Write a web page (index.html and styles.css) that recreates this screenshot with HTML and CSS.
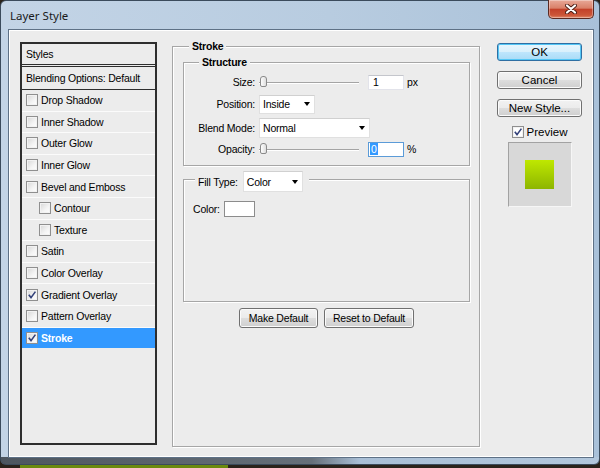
FILE: index.html
```html
<!DOCTYPE html>
<html>
<head>
    <title>Layer Style</title>
    <link rel="stylesheet" href="styles.css">
</head>
<body>
    <div class="window">
        <div class="titlebar">
            <span class="title">Layer Style</span>
            <div class="close-btn">
                <svg width="12" height="10" viewBox="0 0 12 10">
                    <path d="M2 1.5 L10 8.5 M10 1.5 L2 8.5" stroke="#4a1c14" stroke-width="4" stroke-linecap="round"/>
                    <path d="M2 1.5 L10 8.5 M10 1.5 L2 8.5" stroke="#fff" stroke-width="2.2" stroke-linecap="round"/>
                </svg>
            </div>
        </div>

        <div class="client">
            <!-- left: list of layer styles -->
            <div class="style-list">
                <div class="list-head">Styles</div>
                <div class="list-head blend">Blending Options: Default</div>
                <div class="list-item first"><span class="check"></span>Drop Shadow</div>
                <div class="list-item"><span class="check"></span>Inner Shadow</div>
                <div class="list-item"><span class="check"></span>Outer Glow</div>
                <div class="list-item"><span class="check"></span>Inner Glow</div>
                <div class="list-item"><span class="check"></span>Bevel and Emboss</div>
                <div class="list-item sub"><span class="check"></span>Contour</div>
                <div class="list-item sub"><span class="check"></span>Texture</div>
                <div class="list-item"><span class="check"></span>Satin</div>
                <div class="list-item"><span class="check"></span>Color Overlay</div>
                <div class="list-item"><span class="check on"><svg width="10" height="10" viewBox="0 0 10 10"><path d="M1.8 4.8 L4 7.6 L8.4 1.6" fill="none" stroke="#34427a" stroke-width="1.6"/></svg></span>Gradient Overlay</div>
                <div class="list-item"><span class="check"></span>Pattern Overlay</div>
                <div class="list-item selected"><span class="check on"><svg width="10" height="10" viewBox="0 0 10 10"><path d="M1.8 4.8 L4 7.6 L8.4 1.6" fill="none" stroke="#34427a" stroke-width="1.6"/></svg></span>Stroke</div>
            </div>

            <!-- middle: stroke settings -->
            <div class="group stroke-group">
                <div class="group-title stroke-title">Stroke</div>

                <div class="group structure">
                    <div class="group-title structure-title">Structure</div>
                    <div class="row short first-row">
                        <label>Size:</label>
                        <div class="slider"><span class="thumb"></span></div>
                        <div class="field">1</div>
                        <span class="unit">px</span>
                    </div>
                    <div class="row">
                        <label>Position:</label>
                        <div class="select pos-select">Inside<i></i></div>
                    </div>
                    <div class="row">
                        <label>Blend Mode:</label>
                        <div class="select blend-select">Normal<i></i></div>
                    </div>
                    <div class="row short last-row">
                        <label>Opacity:</label>
                        <div class="slider"><span class="thumb"></span></div>
                        <div class="field focused"><span class="sel-text">0</span></div>
                        <span class="unit">%</span>
                    </div>
                </div>

                <div class="group fill">
                    <div class="group-title fill-title">
                        <span>Fill Type:</span>
                        <div class="select fill-select">Color<i></i></div>
                    </div>
                    <div class="color-row">
                        <span>Color:</span>
                        <div class="swatch"></div>
                    </div>
                </div>

                <div class="btn-row">
                    <button class="btn make-default">Make Default</button>
                    <button class="btn reset-default">Reset to Default</button>
                </div>
            </div>

            <!-- right: dialog actions -->
            <div class="actions">
                <button class="btn big default">OK</button>
                <button class="btn big">Cancel</button>
                <button class="btn big">New Style...</button>
                <div class="preview-row">
                    <span class="check on"><svg width="10" height="10" viewBox="0 0 10 10"><path d="M1.8 4.8 L4 7.6 L8.4 1.6" fill="none" stroke="#34427a" stroke-width="1.6"/></svg></span>
                    <span>Preview</span>
                </div>
                <div class="preview-box">
                    <div class="preview-swatch"></div>
                </div>
            </div>
        </div>
    </div>
    <div class="desk-strip"></div>
</body>
</html>
```

FILE: styles.css
```css
body {
    margin: 0;
    width: 600px;
    height: 468px;
    overflow: hidden;
    background-color: #2a231b;
    font-family: "Liberation Sans", Arial, sans-serif;
    font-size: 10.5px;
    letter-spacing: -0.2px;
    color: #000;
}

.window {
    width: 600px;
    height: 465px;
    box-sizing: border-box;
    border: 1px solid #3b4b5c;
    border-radius: 6px;
    display: flex;
    flex-direction: column;
    background:
        linear-gradient(to right, #4d565f, #66707a 52%, #a9bfd6 60%, #b2c7dc) left bottom / 100% 7px no-repeat,
        linear-gradient(to right, #c3d4e6, #b8cce0 55%, #a9c1d9);
}

.titlebar {
    height: 28px;
    display: flex;
    align-items: center;
    padding: 0 5px 0 9px;
}

.title {
    font-family: "Noto Sans", "Liberation Sans", sans-serif;
    font-size: 11.5px;
    letter-spacing: 0;
    color: #1a1a1a;
}

.close-btn {
    width: 46px;
    height: 19px;
    box-sizing: border-box;
    margin-left: auto;
    align-self: flex-start;
    margin-top: -1px;
    border: 1px solid #5a2a22;
    border-top: none;
    border-radius: 0 0 5px 5px;
    background: linear-gradient(#e8a898 0%, #d98069 45%, #c3412a 52%, #cc5638 85%, #e08a6c 100%);
    box-shadow: inset 0 0 0 1px rgba(255, 255, 255, 0.35);
    display: flex;
    align-items: center;
    justify-content: center;
}

.client {
    margin: 0 5px 0 7px;
    height: 429px;
    box-sizing: border-box;
    border: 1px solid #5e7186;
    box-shadow: inset 1px 1px 0 #fff, inset -1px -1px 0 #fff;
    background-color: #ececec;
    display: flex;
    align-items: flex-start;
    padding: 12px 0 0 11px;
}

/* style list */
.style-list {
    width: 137px;
    height: 403px;
    box-sizing: border-box;
    border: 2px solid #2e2e2e;
    flex-shrink: 0;
}

.list-head {
    height: 20px;
    line-height: 20px;
    padding-left: 4px;
    border-bottom: 1px solid #2e2e2e;
}

.list-head.blend {
    height: 23px;
    line-height: 22px;
    box-sizing: border-box;
    margin-top: 1px;
    border-top: 1px solid #2e2e2e;
    border-bottom: none;
}

.list-item {
    height: 21.6px;
    box-sizing: border-box;
    border-top: 1px solid #fbfbfb;
    display: flex;
    align-items: center;
    padding-left: 4px;
}

.list-item.first {
    border-top-color: #2e2e2e;
}

.list-item.sub {
    padding-left: 17px;
}

.list-item.selected {
    background-color: #3399ff;
    color: #fff;
    font-weight: bold;
}

.check {
    width: 12px;
    height: 12px;
    box-sizing: border-box;
    border: 1px solid #8f8f8f;
    background: linear-gradient(135deg, #d6d6d6, #f4f4f4 60%, #fff);
    box-shadow: inset 0 0 0 1px #f2f2f2;
    margin-right: 3px;
    display: flex;
    align-items: center;
    justify-content: center;
    flex-shrink: 0;
}

.check svg {
    display: block;
}

/* group boxes */
.group {
    border: 1px solid #a6a6a6;
    box-shadow: inset 1px 1px 0 #fff, 1px 1px 0 #fff;
}

.group-title {
    width: fit-content;
    background-color: #ececec;
    padding: 0 3px;
    height: 12px;
    line-height: 12px;
    margin-top: -7px;
    font-weight: bold;
}

.stroke-group {
    width: 308px;
    height: 401px;
    box-sizing: border-box;
    margin: 4px 0 0 15px;
    padding: 0 9px 0 10px;
    flex-shrink: 0;
}

.stroke-title {
    margin-left: 6px;
}

.structure {
    margin-top: 10px;
    padding-bottom: 8px;
}

.structure-title {
    margin-left: 15px;
}

.row {
    display: flex;
    align-items: center;
    height: 20px;
    margin-top: 4px;
}

.row.short {
    height: 16px;
}

.row.first-row {
    margin-top: 6px;
}

.row.last-row {
    margin-top: 3px;
}

.row label {
    width: 71px;
    text-align: right;
    margin-right: 4px;
    flex-shrink: 0;
}

.slider {
    width: 100px;
    height: 12px;
    margin-right: 9px;
    background:
        linear-gradient(#a4a4a4, #a4a4a4) left 6px / 100% 1px no-repeat,
        linear-gradient(#fff, #fff) left 7px / 100% 1px no-repeat;
    display: flex;
}

.thumb {
    width: 7px;
    height: 11px;
    box-sizing: border-box;
    margin-left: 1px;
    border: 1px solid #8a8a8a;
    border-radius: 3px 3px 2px 2px;
    background: linear-gradient(to right, #fdfdfd, #dedede);
}

.field {
    width: 36px;
    height: 15px;
    line-height: 13px;
    box-sizing: border-box;
    padding-left: 4px;
    background-color: #fff;
    border: 1px solid #e2e3ea;
    border-top-color: #c4c6cc;
}

.field.focused {
    border-color: #5b9bd8;
    padding-left: 1px;
}

.sel-text {
    display: inline-block;
    background-color: #3399ff;
    color: #fff;
    padding: 0 1px;
    line-height: 12px;
}

.unit {
    margin-left: 3px;
}

.select {
    height: 20px;
    box-sizing: border-box;
    display: flex;
    align-items: center;
    justify-content: space-between;
    padding: 0 4px 0 3px;
    background-color: #fff;
    border: 1px solid #e0e0e0;
    border-top-color: #d0d0d0;
}

.select i {
    width: 0;
    height: 0;
    border-left: 3.5px solid transparent;
    border-right: 3.5px solid transparent;
    border-top: 4px solid #000;
}

.pos-select {
    width: 56px;
    height: 19px;
}

.blend-select {
    width: 111px;
}

.fill {
    margin-top: 13px;
    height: 123px;
    box-sizing: border-box;
}

.fill-title {
    display: flex;
    align-items: center;
    height: 21px;
    margin: -9px 0 0 11px;
    padding: 0 6px 0 3px;
    font-weight: normal;
}

.fill-select {
    width: 60px;
    height: 21px;
    margin-left: 5px;
}

.color-row {
    display: flex;
    align-items: center;
    margin: 9px 0 0 9px;
}

.swatch {
    width: 31px;
    height: 16px;
    box-sizing: border-box;
    margin-left: 4px;
    background-color: #fff;
    border: 1px solid #8c8c8c;
}

/* buttons */
.btn {
    font: inherit;
    letter-spacing: inherit;
    color: #000;
    padding: 0;
    height: 20px;
    box-sizing: border-box;
    border: 1px solid #707070;
    border-radius: 3px;
    background: linear-gradient(#f2f2f2 0%, #ebebeb 50%, #dddddd 51%, #cfcfcf 100%);
    box-shadow: inset 0 0 0 1px #fbfbfb;
}

.btn-row {
    display: flex;
    justify-content: center;
    gap: 6px;
    margin-top: 6px;
}

.make-default {
    width: 79px;
}

.reset-default {
    width: 90px;
}

.actions {
    width: 85px;
    margin: 1px 0 0 17px;
    display: flex;
    flex-direction: column;
    align-items: center;
    flex-shrink: 0;
    font-size: 11.5px;
    letter-spacing: 0;
}

.btn.big {
    width: 85px;
    height: 18px;
    margin-bottom: 10px;
    font-size: 11.5px;
    letter-spacing: 0;
}

.btn.default {
    border-color: #2f6fa3;
    background: linear-gradient(#e8f6fd 0%, #d9f0fc 50%, #bee6fd 51%, #a9dbf6 100%);
    box-shadow: inset 0 0 0 1px #53c6f5;
}

.preview-row {
    display: flex;
    align-items: center;
    height: 12px;
    margin-top: -1px;
}

.preview-row .check {
    background: #fff;
}

.preview-box {
    width: 64px;
    height: 65px;
    box-sizing: border-box;
    margin-top: 4px;
    background-color: #d8d8d8;
    border: 1px solid #f6f6f6;
    border-top-color: #a2a2a2;
    border-left-color: #a2a2a2;
    display: flex;
    align-items: center;
    justify-content: center;
}

.preview-swatch {
    width: 29px;
    height: 29px;
    background: linear-gradient(#bfe800, #8db500);
}

.desk-strip {
    width: 208px;
    height: 3px;
    margin-left: 20px;
    background-color: #6b8a0e;
}
```
